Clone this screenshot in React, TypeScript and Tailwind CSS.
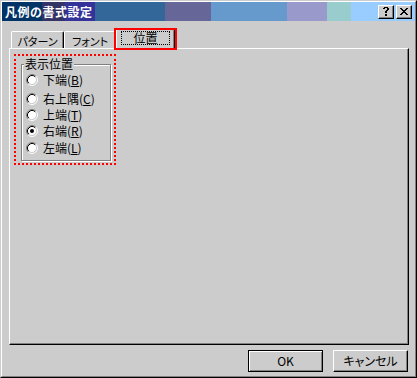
import React from 'react';

const pixels = (rows: string[]) =>
  rows.flatMap((r, y) =>
    r.split('').map((c, x) =>
      c === 'x' ? <rect key={`${x}-${y}`} x={x} y={y} width="1" height="1" fill="#000" /> : null
    )
  );

const CloseGlyph = () => (
  <svg width="8" height="7" viewBox="0 0 8 7" shapeRendering="crispEdges">
    {pixels(['xx....xx', '.xx..xx.', '..xxxx..', '...xx...', '..xxxx..', '.xx..xx.', 'xx....xx'])}
  </svg>
);

const HelpGlyph = () => (
  <svg width="6" height="9" viewBox="0 0 6 9" shapeRendering="crispEdges">
    {pixels(['.xxxx.', 'xx..xx', '....xx', '...xx.', '..xx..', '..xx..', '......', '..xx..', '..xx..'])}
  </svg>
);

const Radio = ({ checked }: { checked?: boolean }) => (
  <svg width="12" height="12" viewBox="0 0 12 12" className="shrink-0">
    <circle cx="6" cy="6" r="4.5" fill="#fff" />
    <path d="M2.11 9.89 A5.5 5.5 0 0 1 9.89 2.11" fill="none" stroke="#808080" strokeWidth="1" />
    <path d="M9.89 2.11 A5.5 5.5 0 0 1 2.11 9.89" fill="none" stroke="#fff" strokeWidth="1" />
    <path d="M2.82 9.18 A4.5 4.5 0 0 1 9.18 2.82" fill="none" stroke="#000" strokeWidth="1" />
    <path d="M9.18 2.82 A4.5 4.5 0 0 1 2.82 9.18" fill="none" stroke="#cccccc" strokeWidth="1" />
    {checked && <circle cx="6" cy="6" r="2" fill="#000" />}
  </svg>
);

const options = [
  { label: '下端', key: 'B', mt: '' },
  { label: '右上隅', key: 'C', mt: 'mt-[3px]' },
  { label: '上端', key: 'T', mt: '' },
  { label: '右端', key: 'R', mt: '', checked: true },
  { label: '左端', key: 'L', mt: 'mt-[1px]' },
];

export default function App() {
  return (
    <div className="w-[417px] h-[378px] bg-[#cccccc] border border-t-[#cccccc] border-l-[#cccccc] border-r-black border-b-black font-['Noto_Sans_CJK_JP',sans-serif] text-[12px] text-black">
      <div className="h-full flex flex-col border border-t-white border-l-white border-r-[#808080] border-b-[#808080]">
        {/* Title bar */}
        <div className="h-[19px] shrink-0 flex items-center pl-[3px] pr-[3px] bg-[linear-gradient(to_right,#003366_0px,#003366_40px,#333366_40px,#333366_63px,#333399_63px,#333399_93px,#336699_93px,#336699_163px,#666699_163px,#666699_209px,#6699cc_209px,#6699cc_285px,#9999cc_285px,#9999cc_325px,#99cccc_325px,#99cccc_349px,#99ccff_349px,#99ccff_100%)]">
          <span className="flex-1 text-white font-bold text-[12px] leading-[14px] tracking-[0.5px]">凡例の書式設定</span>
          <button className="w-[16px] h-[14px] flex items-center justify-center bg-[#cccccc] border border-t-white border-l-white border-r-black border-b-black shadow-[inset_-1px_-1px_0_#808080]">
            <HelpGlyph />
          </button>
          <button className="ml-[2px] w-[16px] h-[14px] flex items-center justify-center bg-[#cccccc] border border-t-white border-l-white border-r-black border-b-black shadow-[inset_-1px_-1px_0_#808080]">
            <CloseGlyph />
          </button>
        </div>

        <div className="flex-1 flex flex-col pl-[7px] pr-[6px] pb-[4px]">
          {/* Tabs */}
          <div className="mt-[8px] h-[19px] flex items-end pl-[2px] [font-feature-settings:'palt']">
            <div className="w-[53px] h-[17px] flex items-center justify-center pt-[1px] border-t border-l border-r border-t-white border-l-white border-r-black rounded-t-[2px] shadow-[inset_-1px_0_0_#808080] text-[11px] leading-[12px]">
              パターン
            </div>
            <div className="w-[52px] h-[17px] flex items-center justify-center pt-[1px] border-t border-l border-r border-t-white border-l-white border-r-black rounded-t-[2px] shadow-[inset_-1px_0_0_#808080] text-[11px] leading-[12px]">
              フォント
            </div>
            <div className="relative z-10 -mb-[1px] w-[59px] h-[20px] flex justify-center pt-[1px] bg-[#cccccc] border-t border-l border-r border-t-white border-l-white border-r-black rounded-t-[2px] shadow-[inset_-1px_0_0_#808080]">
              <span className="h-[14px] px-[11px] border border-dotted border-black leading-[12px]">位置</span>
              <span className="pointer-events-none absolute -left-[3px] -top-[2px] -right-[3px] -bottom-[1px] border-2 border-[#ff0000]" />
            </div>
          </div>

          {/* Panel */}
          <div className="flex-1 border border-t-white border-l-white border-r-black border-b-black shadow-[inset_-1px_-1px_0_#808080] pl-[4px] pt-[5px]">
            <div className="w-[102px] border-2 border-dotted border-[#ff0000] pl-[5px] pr-[3px] pt-[1px] pb-[2px]">
              <fieldset className="w-[90px] border border-[#808080] shadow-[inset_1px_1px_0_#fff,1px_1px_0_#fff] pl-[4px] pt-[1px] pb-[4px]">
                <legend className="ml-[-2px] px-[1px] bg-[#cccccc] leading-[14px]">表示位置</legend>
                <div className="flex flex-col">
                  {options.map((o) => (
                    <label key={o.key} className={`h-[16px] flex items-center gap-[5px] leading-[12px] ${o.mt}`}>
                      <Radio checked={o.checked} />
                      <span>
                        {o.label}(<span className="underline">{o.key}</span>)
                      </span>
                    </label>
                  ))}
                </div>
              </fieldset>
            </div>
          </div>

          {/* Buttons */}
          <div className="mt-[5px] flex justify-end gap-[10px] pr-[1px] [font-feature-settings:'palt']">
            <button className="w-[75px] h-[22px] border border-black shadow-[inset_1px_1px_0_#fff,inset_-1px_-1px_0_#808080] leading-[12px]">
              OK
            </button>
            <button className="w-[75px] h-[22px] border border-t-white border-l-white border-r-black border-b-black shadow-[inset_-1px_-1px_0_#808080] leading-[12px]">
              キャンセル
            </button>
          </div>
        </div>
      </div>
    </div>
  );
}
